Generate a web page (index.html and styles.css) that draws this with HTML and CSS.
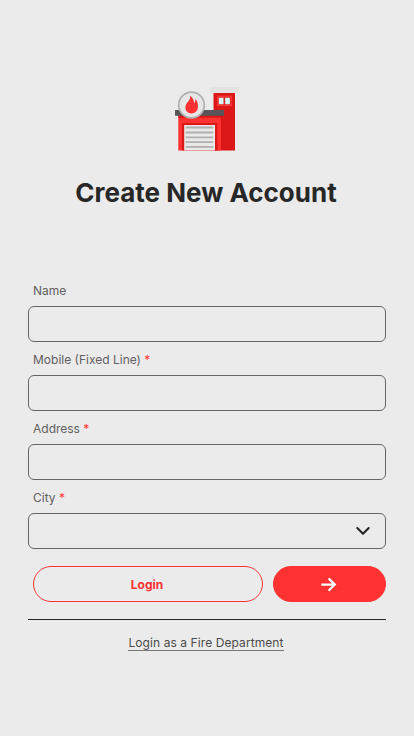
FILE: index.html
```html
<!DOCTYPE html>
<html lang="en">
<head>
<meta charset="utf-8">
<meta name="viewport" content="width=device-width, initial-scale=1">
<title>Create New Account</title>
<link rel="stylesheet" href="styles.css">
</head>
<body>
<main class="page">
  <svg class="logo" viewBox="0 0 80 80" aria-hidden="true">
    <path fill="#e3e3e4" d="M45 7h29v6H45z"/>
    <path fill="#dc1718" d="M48.500 13H70v57.500H48.500z"/>
    <path fill="#ff3434" d="M52 15.700h15v10.300H52z"/>
    <path fill="#e0201f" d="M53.300 17h12.400v8H53.300z"/>
    <path fill="#cffaf9" d="M53.800 17.800h4.700v6.400h-4.700zM60.200 17.800h4.700v6.400h-4.700z"/>
    <path fill="#ff3232" d="M13.300 35H56v35.500H13.300z"/>
    <path fill="#dc1718" d="M13.300 35H56v2.700H13.300zM17 43h35.500v27.500H17z"/>
    <path fill="#585457" d="M10 30h49v5.700H10z"/>
    <path fill="#e9e9ea" d="M19.200 45H50v25.500H19.200z"/>
    <path stroke="#b0b0b0" stroke-width="1.800" d="M20.700 47.500h27.600M20.700 52.500h27.600M20.700 57.300h27.600M20.700 62.100h27.600M20.700 66.900h27.600"/>
    <circle cx="26.500" cy="25" r="12.800" fill="#e6e6e7" stroke="#b0b0b1" stroke-width="1.700"/>
    <path fill="#ff3131" d="M26.500 33.400c-3.900 0-6.200-2.700-6.100-6.100.1-3 1.800-4.300 3.200-6.200 1.300-1.800 1.700-3.300 1.600-5.400 2.400 1.700 3.900 4.700 3.900 7.800.9-1 1.300-2.600 1.300-4.400 2 1.600 2.700 4.900 2.500 8.200-.2 3.500-2.600 6.100-6.400 6.100z"/>
  </svg>
  <h1 class="title">Create New Account</h1>
  <form class="form">
    <div class="field">
      <label class="label" for="name">Name</label>
      <input class="control" id="name" type="text">
    </div>
    <div class="field">
      <label class="label" for="mobile">Mobile (Fixed Line) <span class="required">*</span></label>
      <input class="control" id="mobile" type="tel">
    </div>
    <div class="field">
      <label class="label" for="address">Address <span class="required">*</span></label>
      <input class="control" id="address" type="text">
    </div>
    <div class="field">
      <label class="label" id="city-label">City <span class="required">*</span></label>
      <div class="control select" role="combobox" tabindex="0" aria-labelledby="city-label">
        <svg class="chevron" viewBox="0 0 16 16" aria-hidden="true"><path d="M2.300 5L8 10.700 13.700 5"/></svg>
      </div>
    </div>
    <div class="actions">
      <button class="button login" type="button">Login</button>
      <button class="button next" type="button" aria-label="Next">
        <svg class="arrow" viewBox="0 0 18 18" aria-hidden="true"><path d="M1.300 9.600h13.500M8.600 3.400l6.200 6.200-6.200 6.200"/></svg>
      </button>
    </div>
  </form>
  <footer class="footer"><a class="link" href="#">Login as a Fire Department</a></footer>
</main>
</body>
</html>
```

FILE: styles.css
```css
* { box-sizing: border-box; }
body {
  margin: 0;
  background: #ebebeb;
  font-family: Inter, sans-serif;
}
.page {
  height: 736px;
  padding: 80px 28px 0;
}
.logo {
  display: block;
  width: 80px;
  height: 80px;
  margin-left: 137px;
}
.title {
  margin: 15px 2px 0 0;
  font-size: 26px;
  line-height: 36px;
  font-weight: 700;
  text-align: center;
  white-space: nowrap;
  color: #272727;
}
.form { margin-top: 71px; }
.field {
  height: 69px;
}
.label {
  display: block;
  height: 24px;
  padding-left: 5px;
  font-size: 12px;
  line-height: 18px;
  color: #606060;
}
.required { color: #ff3131; }
.control {
  display: block;
  width: 100%;
  height: 36px;
  padding: 0 14px;
  border: 1px solid #666;
  border-radius: 6px;
  background: transparent;
  font: inherit;
  outline: none;
}
.select {
  display: flex;
  align-items: center;
  justify-content: flex-end;
}
.chevron { width: 16px; height: 16px; }
.chevron path {
  fill: none;
  stroke: #272727;
  stroke-width: 2.1;
  stroke-linecap: round;
  stroke-linejoin: round;
}
.actions {
  display: flex;
  gap: 10px;
  margin-top: 8px;
  padding-left: 5px;
}
.button {
  display: flex;
  align-items: center;
  justify-content: center;
  height: 36px;
  padding: 0;
  border: 1px solid #ff3131;
  border-radius: 18px;
  font: 700 12px Inter, sans-serif;
}
.login {
  width: 230px;
  padding-right: 2px;
  background: transparent;
  color: #ff3131;
}
.next {
  width: 113px;
  padding-right: 2px;
  background: #ff3131;
}
.arrow { width: 18px; height: 18px; }
.arrow path {
  fill: none;
  stroke: #fff;
  stroke-width: 2.3;
}
.footer {
  margin-top: 17px;
  padding: 16px 2px 0 0;
  border-top: 1px solid #272727;
  line-height: 0;
  text-align: center;
}
.link {
  display: inline-block;
  border-bottom: 1px solid #777;
  font-size: 12px;
  line-height: 14px;
  letter-spacing: 0.08px;
  color: #4b4b4b;
  text-decoration: none;
}
```
